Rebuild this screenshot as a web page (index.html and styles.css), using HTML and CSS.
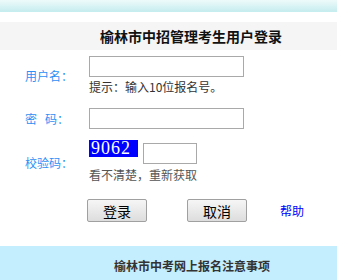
FILE: index.html
```html
<!DOCTYPE html>
<html lang="zh-CN">

<head>
    <meta charset="UTF-8">
    <title>榆林市中招管理考生用户登录</title>
    <link rel="stylesheet" href="styles.css">
</head>

<body>
    <div class="top-bar"></div>

    <div class="login-title">榆林市中招管理考生用户登录</div>

    <form class="login-form" onsubmit="return false;">
        <label class="form-label" for="userName">用户名：</label>
        <div class="form-cell">
            <input type="text" class="form-input" id="userName" name="userName">
            <div class="form-tip">提示：输入10位报名号。</div>
        </div>

        <label class="form-label" for="password">密&nbsp;&nbsp;&nbsp;码：</label>
        <div class="form-cell">
            <input type="password" class="form-input" id="password" name="password">
        </div>

        <label class="form-label" for="checkCode">校验码：</label>
        <div class="form-cell">
            <div class="code-row">
                <span class="code-img">9062</span>
                <input type="text" class="code-input" id="checkCode" name="checkCode">
            </div>
            <div class="form-tip code-tip">看不清楚，重新获取</div>
        </div>

        <div class="form-buttons">
            <button type="submit" class="btn">登录</button>
            <button type="reset" class="btn">取消</button>
            <a href="#" class="help-link">帮助</a>
        </div>
    </form>

    <div class="notice-bar">榆林市中考网上报名注意事项</div>
</body>

</html>
```

FILE: styles.css
```css
body {
    margin: 0;
    background-color: #ffffff;
    font-family: "Noto Sans CJK SC", "Liberation Sans", sans-serif;
    font-size: 12px;
    color: #333;
}

.top-bar {
    height: 12px;
    background: linear-gradient(to bottom, #eefafa, #c4ecee);
}

.login-title {
    margin-top: 10px;
    height: 28px;
    line-height: 28px;
    padding-left: 100px;
    background-color: #f5f5f5;
    font-size: 14px;
    font-weight: bold;
    color: #111;
}

.login-form {
    display: grid;
    grid-template-columns: 89px auto;
    align-items: center;
    row-gap: 14px;
    margin-top: 6px;
}

.form-label {
    padding-left: 25px;
    font-size: 12px;
    color: #2f8ff5;
    white-space: nowrap;
}

.form-cell {
    display: flex;
    flex-direction: column;
    align-items: flex-start;
}

.form-input {
    box-sizing: border-box;
    width: 155px;
    height: 21px;
    margin: 0;
    border: 1px solid #a9a9a9;
    padding: 0 3px;
    font-size: 12px;
}

.form-tip {
    margin-top: 3px;
    line-height: 14px;
    color: #333;
}

.code-row {
    display: flex;
    align-items: flex-start;
    margin-top: -3px;
}

.code-img {
    display: block;
    width: 49px;
    height: 17px;
    line-height: 17px;
    padding-left: 2px;
    box-sizing: border-box;
    background-color: #0000ff;
    color: #ffffff;
    font-family: "Liberation Serif", serif;
    font-size: 18px;
    letter-spacing: 1px;
}

.code-input {
    box-sizing: border-box;
    width: 54px;
    height: 21px;
    margin: 3px 0 0 5px;
    border: 1px solid #a9a9a9;
}

.code-tip {
    margin-top: 4px;
    color: #555;
}

.form-buttons {
    grid-column: 1 / 3;
    display: flex;
    align-items: center;
    padding-left: 87px;
    margin-top: 3px;
}

.btn {
    box-sizing: border-box;
    width: 60px;
    height: 23px;
    margin: 0 40px 0 0;
    padding: 0;
    border: 1px solid #a0a0a0;
    border-radius: 2px;
    background: linear-gradient(to bottom, #f6f6f6, #dddddd);
    font-family: "Noto Sans CJK SC", sans-serif;
    font-size: 14px;
    color: #000;
}

.btn + .btn {
    margin-right: 33px;
}

.help-link {
    font-size: 12px;
    color: #0000ff;
    text-decoration: none;
}

.notice-bar {
    margin-top: 24px;
    height: 38px;
    padding-left: 114px;
    padding-top: 11px;
    box-sizing: border-box;
    background-color: #c4eefe;
    font-size: 12px;
    font-weight: bold;
    color: #333;
}
```
